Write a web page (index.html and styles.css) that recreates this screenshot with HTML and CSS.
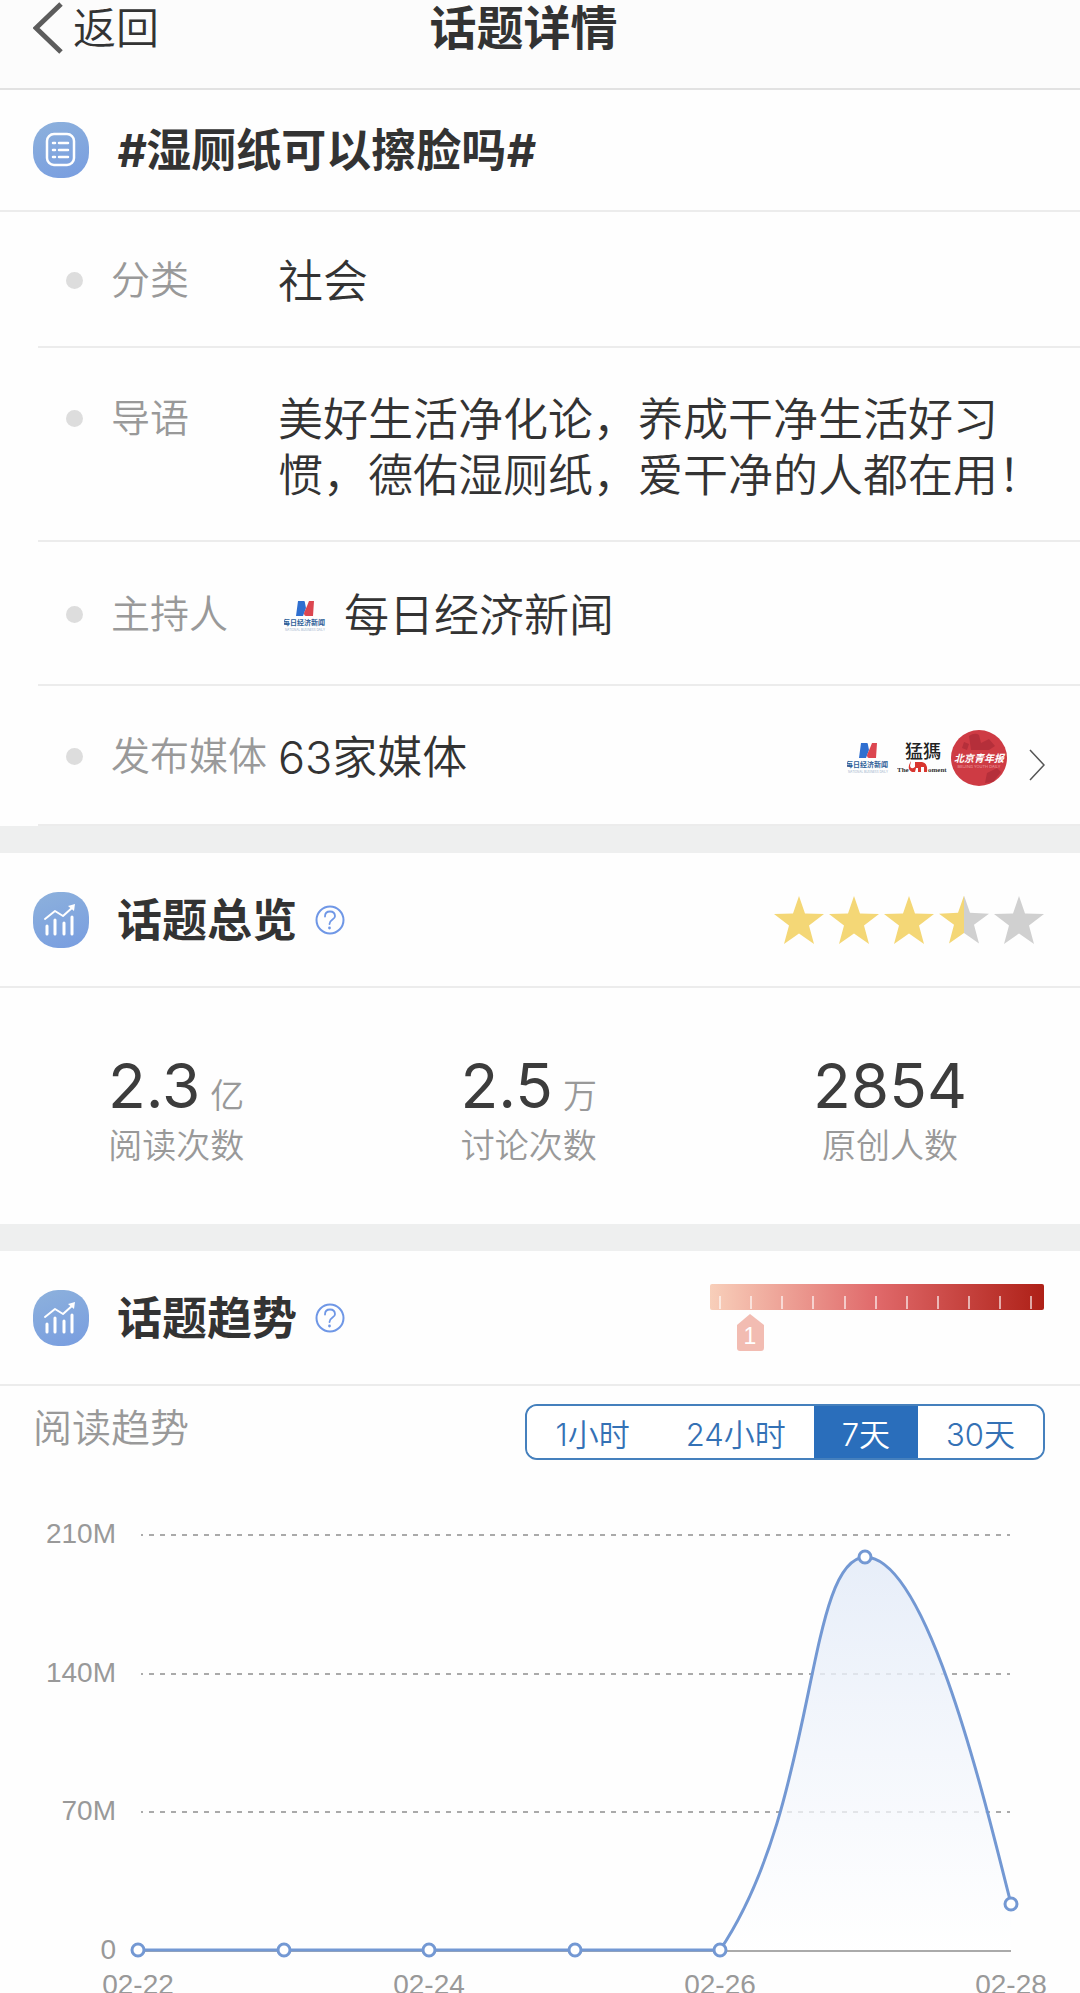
FILE: index.html
```html
<!DOCTYPE html>
<html lang="zh-CN">
<head>
  <meta charset="UTF-8" />
  <meta name="viewport" content="width=device-width, initial-scale=1" />
  <title>话题详情</title>
  <link rel="stylesheet" href="styles.css">
</head>
<body>

  <!-- shared symbols -->
  <svg class="symbols" aria-hidden="true">
    <symbol id="icon-trend" viewBox="0 0 56 56">
      <g fill="none" stroke="#fff" stroke-linecap="round" stroke-linejoin="round">
        <path d="M12 27 L22 19 L30 24 L40 15" stroke-width="2" />
        <path d="M14 34V42 M22 28V42 M31 31V42 M39 25V42" stroke-width="3" />
      </g>
      <path d="M35 14 L42 12 L41 19 Z" fill="#fff" />
    </symbol>
    <symbol id="icon-help" viewBox="0 0 30 30">
      <g fill="none" stroke="#6f97e6" stroke-linecap="round">
        <circle cx="15" cy="15" r="13.5" stroke-width="2" />
        <path d="M10 11.5C10 8.300 12 6.500 15 6.500S20 8.300 20 11.200C20 14.700 14.500 14.500 14.500 19" stroke-width="1.800" />
      </g>
      <circle cx="14.500" cy="23" r="1.400" fill="#6f97e6" />
    </symbol>
    <symbol id="star" viewBox="0 0 50 48">
      <path d="M25 0 L31 17.500 L50 18 L35 29.500 L40 48 L25 37.500 L10 48 L15 29.500 L0 18 L19 17.500 Z" />
    </symbol>
  </svg>

  <header class="navbar">
    <a class="back" href="#">
      <svg class="back-arrow" viewBox="0 0 30 52" aria-hidden="true"><path d="M28 2 L3 26 L28 50" fill="none" stroke="#5c5c5c" stroke-width="5" /></svg>
      返回
    </a>
    <h1>话题详情</h1>
  </header>

  <main>
    <section>
      <div class="section-head">
        <span class="badge">
          <svg viewBox="0 0 56 56" aria-hidden="true">
            <rect x="14" y="12" width="27" height="31" rx="7" fill="none" stroke="#fff" stroke-width="2.500" />
            <path d="M26 21H35 M26 28H35 M26 35H35" stroke="#fff" stroke-width="2.500" stroke-linecap="round" />
            <path d="M20 21H22 M20 28H22 M20 35H22" stroke="#fff" stroke-width="2.500" stroke-linecap="round" />
          </svg>
        </span>
        <h2><i>#</i>湿厕纸可以擦脸吗<i>#</i></h2>
      </div>

      <dl class="info">
        <div class="info-row">
          <dt>分类</dt>
          <dd>社会</dd>
        </div>
        <div class="info-row">
          <dt>导语</dt>
          <dd>美好生活净化论，养成干净生活好习惯，德佑湿厕纸，爱干净的人都在用！</dd>
        </div>
        <div class="info-row">
          <dt>主持人</dt>
          <dd class="host">
            <svg class="logo-nbd" viewBox="0 0 42 32" aria-hidden="true">
              <path d="M14 1H20Q21 1 21 3L22 8L19 16H12Z" fill="#2f6fd0" />
              <path d="M23 6L25 1H30L29 16H22Q20 16 20 13Z" fill="#dc4650" />
              <text x="20" y="25" font-size="7" font-weight="700" text-anchor="middle" fill="#2f5f98">每日经济新闻</text>
              <text x="21" y="31" font-size="3" text-anchor="middle" fill="#7f9cba">NATIONAL BUSINESS DAILY</text>
            </svg>
            每日经济新闻
          </dd>
        </div>
        <div class="info-row">
          <dt>发布媒体</dt>
          <dd class="media">
            63家媒体
            <a class="media-link" href="#" aria-label="查看全部媒体">
              <svg class="logo-nbd" viewBox="0 0 42 32" aria-hidden="true">
                <path d="M14 1H20Q21 1 21 3L22 8L19 16H12Z" fill="#2f6fd0" />
                <path d="M23 6L25 1H30L29 16H22Q20 16 20 13Z" fill="#dc4650" />
                <text x="20" y="25" font-size="7" font-weight="700" text-anchor="middle" fill="#2f5f98">每日经济新闻</text>
                <text x="21" y="31" font-size="3" text-anchor="middle" fill="#7f9cba">NATIONAL BUSINESS DAILY</text>
              </svg>
              <svg class="logo-moment" viewBox="0 0 50 34" aria-hidden="true">
                <text x="26" y="17" font-size="18" font-weight="500" text-anchor="middle" fill="#222">猛獁</text>
                <path d="M14 20Q9 28 15 31H18L19 27H21V31H24V26H27V31H30Q31 22 25 21H18V26Q14 29 13 25Z" fill="#d8362f" />
                <text class="latin" x="0" y="31" font-size="7" font-weight="700" fill="#333">The</text>
                <text class="latin" x="31" y="31" font-size="7" font-weight="700" fill="#333">oment</text>
              </svg>
              <svg class="logo-youth" viewBox="0 0 56 56" aria-hidden="true">
                <circle cx="28" cy="28" r="28" fill="#ce3b44" />
                <path d="M18 6Q24 2 28 5L30 13L38 9L44 16L38 20H20Z M36 43L46 38L50 42L42 52L34 53Z M13 12L18 14L16 20L11 18Z" fill="#b52f3a" />
                <text x="28" y="32" font-size="10" font-weight="700" font-style="italic" text-anchor="middle" fill="#fff">北京青年报</text>
                <text x="28" y="38" font-size="4" text-anchor="middle" fill="#f3b9bb">BEIJING YOUTH DAILY</text>
              </svg>
              <svg class="arrow" viewBox="0 0 16 32" aria-hidden="true"><path d="M1 1 L15 16 L1 31" fill="none" stroke="#555" stroke-width="1.500" /></svg>
            </a>
          </dd>
        </div>
      </dl>
    </section>

    <section>
      <div class="section-head">
        <span class="badge"><svg aria-hidden="true"><use href="#icon-trend" /></svg></span>
        <h2>话题总览</h2>
        <button class="help" type="button" aria-label="话题总览说明"><svg aria-hidden="true"><use href="#icon-help" /></svg></button>
        <div class="stars" role="img" aria-label="3.5 / 5">
          <svg><use href="#star" /></svg>
          <svg><use href="#star" /></svg>
          <svg><use href="#star" /></svg>
          <svg class="half"><use href="#star" /></svg>
          <svg class="off"><use href="#star" /></svg>
        </div>
      </div>
      <div class="stats">
        <div class="stat">
          <p class="stat-value">2.3<small>亿</small></p>
          <p class="stat-label">阅读次数</p>
        </div>
        <div class="stat">
          <p class="stat-value">2.5<small>万</small></p>
          <p class="stat-label">讨论次数</p>
        </div>
        <div class="stat">
          <p class="stat-value">2854</p>
          <p class="stat-label">原创人数</p>
        </div>
      </div>
    </section>

    <section>
      <div class="section-head">
        <span class="badge"><svg aria-hidden="true"><use href="#icon-trend" /></svg></span>
        <h2>话题趋势</h2>
        <button class="help" type="button" aria-label="话题趋势说明"><svg aria-hidden="true"><use href="#icon-help" /></svg></button>
        <svg class="heat" viewBox="0 0 334 68" role="img" aria-label="热度 1">
          <defs>
            <linearGradient id="heatFill">
              <stop offset="0" stop-color="#f8cfba" />
              <stop offset="0.500" stop-color="#e0696a" />
              <stop offset="1" stop-color="#ae2017" />
            </linearGradient>
          </defs>
          <rect width="334" height="26" rx="2" fill="url(#heatFill)" />
          <path d="M10 12V25 M41 12V25 M72 12V25 M103 12V25 M135 12V25 M166 12V25 M197 12V25 M228 12V25 M259 12V25 M290 12V25 M321 12V25" stroke="#fff" stroke-opacity="0.800" stroke-width="1.500" />
          <path d="M40 30 L54 41V64Q54 67 51 67H30Q27 67 27 64V41Z" fill="#f2bcb2" />
          <text class="heat-level" x="40" y="60" font-size="23" text-anchor="middle" fill="#fff">1</text>
        </svg>
      </div>

      <div class="trend-bar">
        <h3>阅读趋势</h3>
        <div class="tabs">
          <button type="button">1小时</button>
          <button type="button">24小时</button>
          <button type="button" class="active" aria-pressed="true">7天</button>
          <button type="button">30天</button>
        </div>
      </div>

      <svg class="chart" viewBox="0 0 1080 530" role="img" aria-label="阅读趋势 02-22 至 02-28">
        <defs>
          <linearGradient id="areaFill" x1="0" y1="0" x2="0" y2="1">
            <stop offset="0" stop-color="#e3ebf8" stop-opacity="0.850" />
            <stop offset="1" stop-color="#ffffff" stop-opacity="0.700" />
          </linearGradient>
        </defs>
        <g class="grid">
          <path d="M141 55H1010 M141 194H1010 M141 332H1010" stroke-dasharray="5 6" stroke-dashoffset="3" />
          <path d="M138 471H1011" />
        </g>
        <path d="M720 470C818 325 805 80 865 77C925 77 980 300 1011 424V470Z" fill="url(#areaFill)" />
        <path class="line" d="M138 470H720C818 325 805 80 865 77C925 77 980 300 1011 424" />
        <g class="dots">
          <circle cx="138" cy="470" r="6" />
          <circle cx="284" cy="470" r="6" />
          <circle cx="429" cy="470" r="6" />
          <circle cx="575" cy="470" r="6" />
          <circle cx="720" cy="470" r="6" />
          <circle cx="865" cy="77" r="6" />
          <circle cx="1011" cy="424" r="6" />
        </g>
        <g class="axis-y">
          <text x="116" y="63">210M</text>
          <text x="116" y="202">140M</text>
          <text x="116" y="340">70M</text>
          <text x="116" y="479">0</text>
        </g>
        <g class="axis-x">
          <text x="138" y="514">02-22</text>
          <text x="429" y="514">02-24</text>
          <text x="720" y="514">02-26</text>
          <text x="1011" y="514">02-28</text>
        </g>
      </svg>
    </section>
  </main>

</body>
</html>
```
FILE: styles.css
```css
* {
  box-sizing: border-box;
}
body {
  margin: 0;
  height: 100vh;
  overflow: hidden;
  background: #fefefe;
  font-family: Inter, "Noto Sans CJK SC", sans-serif;
  color: #333;
}
h1, h2, h3, p, dl, dd {
  margin: 0;
}
a {
  color: inherit;
  text-decoration: none;
}
button {
  font-family: inherit;
  cursor: pointer;
}
svg {
  display: block;
}
.symbols {
  position: absolute;
  width: 0;
  height: 0;
}
.latin {
  font-family: "Liberation Serif", serif;
}

/* Top bar */
.navbar {
  display: grid;
  grid-template-columns: 1fr auto 1fr;
  align-items: center;
  padding: 0 66px 32px 33px;
  background: #fcfcfc;
  border-bottom: 2px solid #e2e2e2;
}
.navbar h1 {
  font-size: 47px;
  line-height: 56px;
  font-weight: 700;
}
.back {
  display: flex;
  align-items: center;
  gap: 10px;
  font-size: 43px;
  line-height: 56px;
  font-weight: 350;
}
.back-arrow {
  width: 30px;
  height: 52px;
}

/* Sections */
section + section {
  border-top: 27px solid #eeefef;
}
.section-head {
  display: flex;
  align-items: center;
  height: 135px;
  padding: 0 36px 0 33px;
  border-bottom: 2px solid #ececec;
}
section:first-child .section-head {
  height: 122px;
}
.section-head h2 {
  margin-left: 28px;
  padding-top: 2px;
  font-size: 45px;
  line-height: 56px;
  font-weight: 700;
}
.badge {
  width: 56px;
  height: 56px;
  border-radius: 25px;
  background: linear-gradient(160deg, #8db1dc, #789de0);
}
.badge svg {
  width: 56px;
  height: 56px;
}
.help {
  margin-left: 18px;
  padding: 0;
  border: 0;
  background: none;
}
.help svg {
  width: 30px;
  height: 30px;
}

/* Topic info */
.info-row {
  display: flex;
  align-items: flex-start;
  margin-left: 38px;
  padding: 42px 35px 36px 28px;
  border-bottom: 2px solid #ececec;
}
.info-row:first-child {
  padding-top: 40px;
}
.info-row:nth-child(3) {
  padding-top: 44px;
  padding-bottom: 40px;
}
.info-row:last-child {
  padding-bottom: 38px;
}
.info-row dt {
  display: flex;
  align-items: center;
  flex: 0 0 212px;
  gap: 28px;
  font-size: 39px;
  line-height: 56px;
  font-weight: 350;
  color: #999;
  white-space: nowrap;
}
.info-row dt::before {
  content: "";
  width: 17px;
  height: 17px;
  border-radius: 50%;
  background: #ddd;
}
.info-row dd {
  flex: 1;
  padding-top: 2px;
  font-size: 45px;
  line-height: 56px;
  font-weight: 350;
}
.info-row .host {
  display: flex;
  align-items: center;
  gap: 18px;
  padding-left: 6px;
}
.info-row .media {
  display: flex;
  align-items: center;
  justify-content: space-between;
}
.media-link {
  display: flex;
  align-items: center;
  gap: 4px;
}
.logo-nbd {
  width: 42px;
  height: 32px;
}
.media-link .logo-nbd {
  margin-right: 4px;
}
.logo-moment {
  width: 50px;
  height: 34px;
}
.logo-youth {
  width: 56px;
  height: 56px;
}
.arrow {
  width: 16px;
  height: 32px;
  margin-top: 14px;
  margin-left: 18px;
}

/* Overview */
.stars {
  display: flex;
  gap: 5px;
  margin-left: auto;
}
.stars svg {
  width: 50px;
  height: 48px;
  fill: #f4d776;
}
.stars .off {
  fill: #d0d0d0;
}
.stars .half {
  background: linear-gradient(90deg, #f4d776 50%, #d0d0d0 50%);
  clip-path: polygon(50% 0, 62% 36%, 100% 38%, 70% 61%, 80% 100%, 50% 78%, 20% 100%, 30% 61%, 0 38%, 38% 36%);
}
.stars .half use {
  display: none;
}
.stats {
  display: flex;
  justify-content: space-between;
  padding: 62px 113px 54px 108px;
}
.stat {
  text-align: center;
}
.stat-value {
  display: flex;
  align-items: baseline;
  justify-content: center;
  gap: 10px;
  font-size: 62px;
  line-height: 72px;
  color: #3c3c3c;
}
.stat-value small {
  font-size: 34px;
  line-height: 48px;
  font-weight: 350;
  color: #999;
}
.stat-label {
  font-size: 34px;
  line-height: 48px;
  font-weight: 350;
  color: #999;
}

/* Trend */
.heat {
  width: 334px;
  height: 68px;
  margin-left: auto;
}
.heat-level {
  font-family: "Liberation Sans", sans-serif;
}
.trend-bar {
  display: flex;
  justify-content: space-between;
  padding: 18px 35px 0 33px;
}
.trend-bar h3 {
  font-size: 39px;
  line-height: 48px;
  font-weight: 350;
  color: #999;
}
.tabs {
  display: flex;
  height: 56px;
  border: 2px solid #4580bd;
  border-radius: 12px;
  overflow: hidden;
}
.tabs button {
  padding: 0 28px;
  border: 0;
  background: #fff;
  color: #3471b5;
  font-size: 31px;
  font-weight: 350;
}
.tabs .active {
  background: #2a6ebb;
  color: #fff;
}
.chart {
  width: 100%;
  margin-top: 20px;
}
.grid path {
  fill: none;
  stroke: #aaa;
  stroke-width: 2;
}
.line {
  fill: none;
  stroke: #7398d3;
  stroke-width: 3;
}
.dots circle {
  fill: #fff;
  stroke: #7398d3;
  stroke-width: 3;
}
.chart text {
  font-family: "Liberation Sans", Arial, sans-serif;
  font-size: 28px;
  fill: #999;
}
.axis-y text {
  text-anchor: end;
}
.axis-x text {
  text-anchor: middle;
}
```
